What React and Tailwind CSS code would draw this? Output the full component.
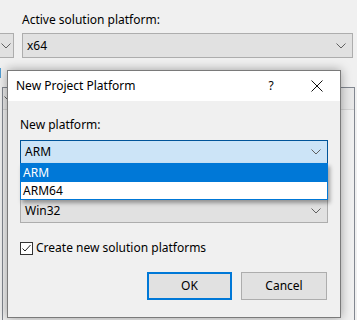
import React from 'react';

const Chevron = ({ className = '' }) => (
  <svg width="10" height="6" viewBox="0 0 10 6" className={className}>
    <path d="M0.5 0.5 L5 5 L9.5 0.5" fill="none" stroke="#606060" strokeWidth="1" />
  </svg>
);

const Combo = ({ value, active, className = '' }) => (
  <div
    className={`flex items-center justify-between h-[24px] pl-[4px] pr-[6px] border ${
      active ? 'bg-[#cce4f7] border-[#005499]' : 'bg-[#e1e1e1] border-[#adadad]'
    } ${className}`}
  >
    <span>{value}</span>
    <Chevron />
  </div>
);

const NewPlatformDialog = () => (
  <div className="absolute left-[7px] top-[70px] w-[334px] h-[248px] bg-[#f0f0f0] border border-[#7a7a7a] shadow-[0_0_10px_rgba(0,0,0,0.35)] flex flex-col">
    <div className="h-[30px] bg-white flex items-center pl-[8px] shrink-0">
      <span className="flex-1">New Project Platform</span>
      <span className="w-[46px] text-center">?</span>
      <svg width="46" height="12" viewBox="0 0 46 12">
        <path d="M17.5 0.5 L28.5 11.5 M28.5 0.5 L17.5 11.5" stroke="#111" strokeWidth="1" />
      </svg>
    </div>
    <div className="px-[12px] pt-[16px] flex flex-col">
      <div className="leading-[16px] mb-[7px]">New platform:</div>
      <div className="relative">
        <Combo value="ARM" active />
        <div className="h-[35px]" />
        <div className="absolute left-0 right-0 top-[23px] z-10 bg-white border border-[#0078d7] shadow-[2px_3px_4px_rgba(0,0,0,0.35)]">
          <div className="h-[18px] bg-[#0078d7] text-white pl-[2px] leading-[18px]">ARM</div>
          <div className="h-[17px] pl-[2px] leading-[17px]">ARM64</div>
        </div>
        <Combo value="Win32" />
      </div>
      <label className="flex items-center mt-[18px] h-[14px]">
        <span className="w-[13px] h-[13px] bg-white border border-[#333] flex items-center justify-center">
          <svg width="11" height="11" viewBox="0 0 11 11">
            <path d="M1.5 5.5 L4 8 L9.5 2" fill="none" stroke="#222" strokeWidth="1" />
          </svg>
        </span>
        <span className="ml-[3px]">Create new solution platforms</span>
      </label>
      <div className="flex justify-end gap-[9px] mt-[17px] pr-[1px]">
        <button className="w-[85px] h-[28px] bg-[#e1e1e1] border-2 border-[#0078d7]">OK</button>
        <button className="w-[86px] h-[28px] bg-[#e1e1e1] border border-[#adadad]">Cancel</button>
      </div>
    </div>
  </div>
);

export default function App() {
  return (
    <div
      className="relative w-[357px] h-[320px] overflow-hidden bg-[#f0f0f0] text-[12px] text-black"
      style={{ fontFamily: '"Noto Sans", "Open Sans", sans-serif' }}
    >
      <div className="pl-[22px] pt-[12px] leading-[16px]">Active solution platform:</div>
      <div className="flex items-center mt-[5px] h-[25px]">
        <div className="w-[14px] h-[25px] border border-l-0 border-[#adadad] bg-[#e1e1e1] flex items-center justify-end pr-[2px]">
          <Chevron />
        </div>
        <div className="ml-[8px] w-[331px] h-[25px] border border-[#adadad] bg-[#e1e1e1] flex items-center justify-between pl-[4px] pr-[6px]">
          <span>x64</span>
          <Chevron />
        </div>
      </div>
      <div className="mt-[8px] leading-[16px] -ml-[20px]">Buil</div>
      <div className="mt-[5px] ml-[2px] w-[353px] h-[240px] border border-[#828790] bg-[#f0f0f0]">
        <div className="h-[22px] border-b border-[#d5d5d5] bg-[#e8e8e8] flex items-center">
          <Chevron className="ml-[1px]" />
        </div>
      </div>
      <NewPlatformDialog />
    </div>
  );
}
